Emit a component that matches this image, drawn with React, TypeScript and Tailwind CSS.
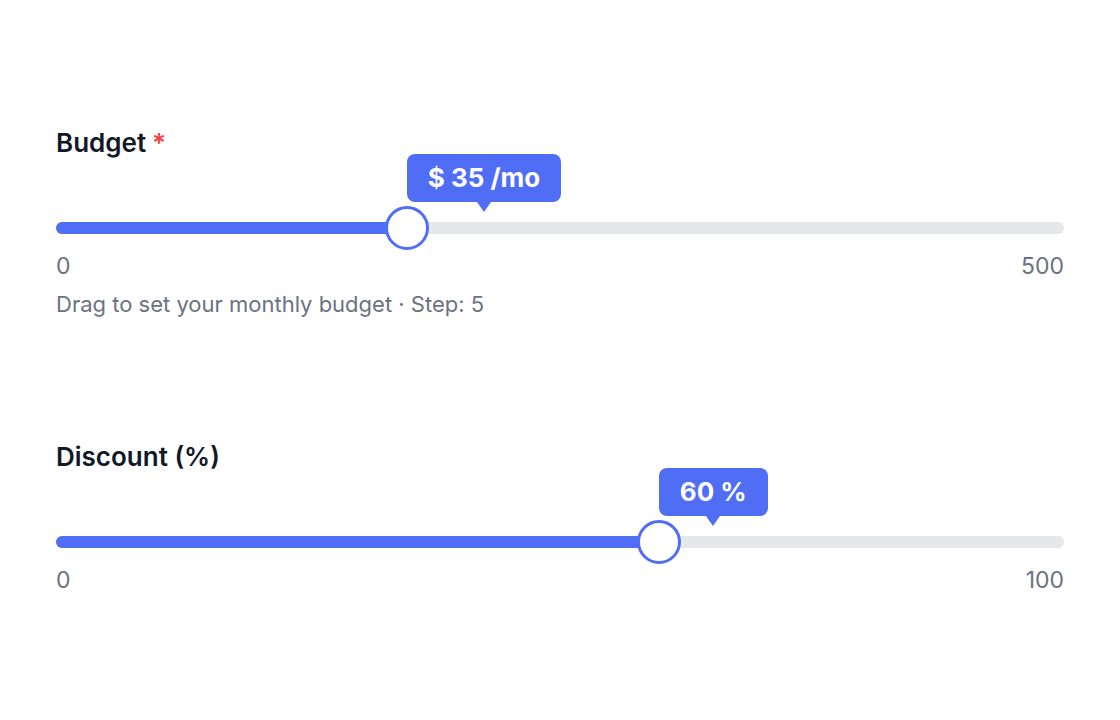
import React from 'react';

type SliderProps = {
    label: string;
    required?: boolean;
    pct: number;
    bubble: string;
    min: string;
    max: string;
    hint?: string;
};

function RangeField({ label, required, pct, bubble, min, max, hint }: SliderProps) {
    return (
        <div className="flex flex-col">
            <div className="text-[26px] leading-8 font-semibold text-[#111827]">
                {label}
                {required && <span className="ml-1.5 text-[#ef4444]">*</span>}
            </div>

            {/* track */}
            <div className="relative mt-[63px] h-3 w-full rounded-full bg-[#e5e7eb]">
                <div className="absolute left-0 top-0 h-3 rounded-full bg-[#506ef5]" style={{ width: `${pct}%` }} />
                <div
                    className="absolute top-1/2 h-11 w-11 -translate-x-1/2 -translate-y-1/2 rounded-full border-[3.5px] border-[#506ef5] bg-white"
                    style={{ left: `${pct}%` }}
                />
                {/* value bubble */}
                <div className="absolute bottom-[calc(100%+20px)]" style={{ left: `${pct}%` }}>
                    <div className="relative whitespace-nowrap rounded-lg bg-[#506ef5] px-[21px] py-[7px] text-[26px] leading-[34px] font-bold text-white">
                        {bubble}
                        <div className="absolute left-1/2 top-full h-0 w-0 -translate-x-1/2 border-x-[7px] border-t-[10px] border-x-transparent border-t-[#506ef5]" />
                    </div>
                </div>
            </div>

            <div className="mt-[18px] flex justify-between text-[23px] leading-7 text-[#6b7280]">
                <span>{min}</span>
                <span>{max}</span>
            </div>
            {hint && <p className="mt-[10px] text-[22px] leading-7 text-[#6b7280]">{hint}</p>}
        </div>
    );
}

export default function App() {
    return (
        <div className="min-h-[720px] w-full bg-white px-14 pt-[127px] font-['Inter',sans-serif]">
            <div className="flex flex-col gap-[123px]">
                <RangeField
                    label="Budget"
                    required
                    pct={34.8}
                    bubble="$ 35 /mo"
                    min="0"
                    max="500"
                    hint="Drag to set your monthly budget · Step: 5"
                />
                <RangeField label="Discount (%)" pct={59.8} bubble="60 %" min="0" max="100" />
            </div>
        </div>
    );
}
